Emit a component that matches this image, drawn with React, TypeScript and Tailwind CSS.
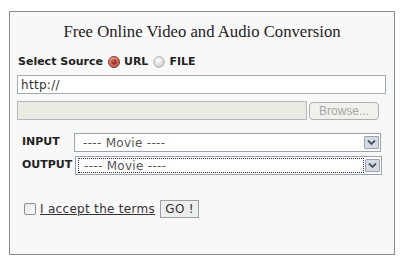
import React from "react";

const verdana = { fontFamily: '"DejaVu Sans", Verdana, sans-serif' };
const verdanaWide = { fontFamily: '"DejaVu Sans", Verdana, sans-serif', letterSpacing: "0.3px" };

function Radio({ checked }: { checked: boolean }) {
  return (
    <svg width="12" height="12" viewBox="0 0 12 12" className="shrink-0">
      <defs>
        <radialGradient id="rg" cx="0.4" cy="0.35" r="0.7">
          <stop offset="0" stopColor="#f0b4a6" />
          <stop offset="1" stopColor="#b04a3e" />
        </radialGradient>
        <radialGradient id="gg" cx="0.4" cy="0.35" r="0.7">
          <stop offset="0" stopColor="#ffffff" />
          <stop offset="1" stopColor="#c8c8c8" />
        </radialGradient>
      </defs>
      {checked ? (
        <>
          <circle cx="6" cy="6" r="5.5" fill="url(#rg)" stroke="#943a30" strokeWidth="1" />
          <circle cx="6" cy="6" r="2.8" fill="#a3362a" />
          <circle cx="5.2" cy="5.1" r="0.9" fill="#e08a7a" />
        </>
      ) : (
        <circle cx="6" cy="6" r="5.3" fill="url(#gg)" stroke="#b0b0b0" strokeWidth="1" />
      )}
    </svg>
  );
}

function Arrow() {
  return (
    <div className="w-[15px] h-[13px] border border-[#9aa3b3] bg-[#d6dbe3] rounded-[1px] flex items-center justify-center">
      <svg width="9" height="7" viewBox="0 0 9 7">
        <path d="M1 1.5 L4.5 5 L8 1.5" fill="none" stroke="#4a5360" strokeWidth="1.8" />
      </svg>
    </div>
  );
}

function Select({ focused }: { focused?: boolean }) {
  return (
    <div className="w-[307px] h-[19px] border border-[#9aa4b0] bg-white flex items-center pl-[2px] pr-[1px]">
      <div
        className={
          "flex-1 h-[15px] flex items-center pl-[5px] text-[12px] text-[#555] " +
          (focused ? "border border-dotted border-[#333]" : "border border-transparent")
        }
        style={verdanaWide}
      >
        ---- Movie ----
      </div>
      <div className="ml-[1px]">
        <Arrow />
      </div>
    </div>
  );
}

export default function App() {
  return (
    <div className="w-[409px] h-[266px] bg-white pt-[11px] pl-[9px]">
      <div className="w-[386px] h-[244px] border border-[#8c8c8c] bg-[#f8f8f8] pl-[7px] flex flex-col">
        <div
          className="mt-[11px] h-[18px] leading-[18px] text-[16.7px] text-[#222] text-center pr-[7px]"
          style={{ fontFamily: '"Liberation Serif", "Times New Roman", serif' }}
        >
          Free Online Video and Audio Conversion
        </div>

        <div className="mt-[14px] h-[14px] flex items-center text-[11px] font-bold text-[#222]" style={verdana}>
          <span className="ml-[1px]">Select Source</span>
          <span className="ml-[5px]"><Radio checked /></span>
          <span className="ml-[4px]">URL</span>
          <span className="ml-[5px]"><Radio checked={false} /></span>
          <span className="ml-[4px]">FILE</span>
        </div>

        <div
          className="mt-[6px] w-[369px] h-[19px] border border-[#a2aab4] bg-white flex items-center pl-[3px] text-[12px] text-[#333]"
          style={verdanaWide}
        >
          http://
        </div>

        <div className="mt-[7px] h-[19px] flex items-center">
          <div className="w-[290px] h-[19px] border border-[#b4b8be] bg-[#ebebe4]" />
          <div
            className="ml-[2px] w-[70px] h-[18px] border border-[#b0b0b0] rounded-[4px] bg-[#f0f0ec] flex items-center justify-center text-[12px] text-[#a8a8a8]"
            style={{ fontFamily: '"Liberation Sans", Arial, sans-serif' }}
          >
            Browse...
          </div>
        </div>

        <div className="mt-[13px] h-[19px] flex items-center">
          <span className="ml-[5px] w-[52px] text-[11px] font-bold text-[#222]" style={verdana}>INPUT</span>
          <Select />
        </div>

        <div className="mt-[4px] h-[19px] flex items-center">
          <span className="ml-[5px] w-[53px] text-[11px] font-bold text-[#222]" style={verdana}>OUTPUT</span>
          <Select focused />
        </div>

        <div className="mt-[25px] h-[18px] flex items-center">
          <div className="ml-[7px] w-[12px] h-[12px] border border-[#8f8f8f] rounded-[2px] bg-gradient-to-br from-[#e6e6e6] to-[#ffffff]" />
          <span className="ml-[4px] text-[12px] text-[#333] underline" style={verdanaWide}>
            I accept the terms
          </span>
          <div
            className="ml-[5px] w-[39px] h-[18px] border border-[#a0a0a0] bg-[#eeeeee] flex items-center justify-center text-[12px] text-[#333]"
            style={verdanaWide}
          >
            GO !
          </div>
        </div>
      </div>
    </div>
  );
}
